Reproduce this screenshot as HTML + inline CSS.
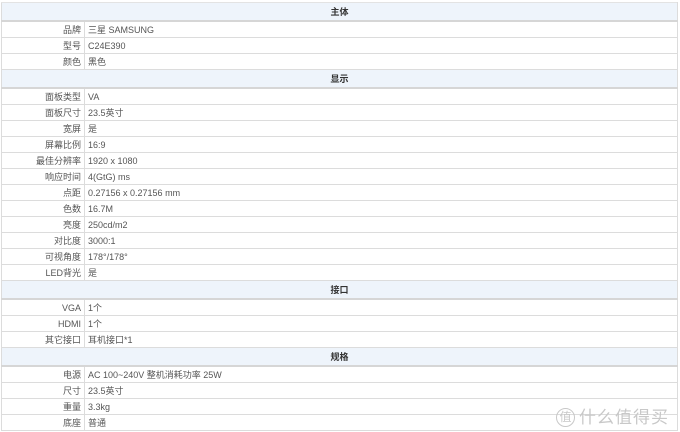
<!DOCTYPE html>
<html><head><meta charset="utf-8"><style>
body{margin:0;background:#fff;font-family:"Liberation Sans","Noto Sans CJK SC",sans-serif;}
table{position:absolute;left:1px;top:2px;width:677px;border-collapse:collapse;font-size:9px;color:#555;}
td{border:1px solid #dcdcdc;height:15px;padding:0 3px;line-height:14px;white-space:nowrap;}
td.l{width:76px;text-align:right;}
tr.h td{background:#eef4fb;height:17px;line-height:16px;text-align:center;font-weight:bold;color:#333;border-top:1px solid #e3e3e3;border-bottom:2px solid #d6d6d6;}
.wm{position:absolute;left:556px;top:403px;color:#c8c8c8;font-size:17px;letter-spacing:1px;}
.wm span{display:inline-block;width:17px;height:17px;border:1px solid #c8c8c8;border-radius:50%;font-size:12px;line-height:17px;text-align:center;margin-right:4px;vertical-align:2px;letter-spacing:0}
</style></head><body>
<table>
<tr class="h"><td colspan="2">主体</td></tr>
<tr><td class="l">品牌</td><td>三星 SAMSUNG</td></tr>
<tr><td class="l">型号</td><td>C24E390</td></tr>
<tr><td class="l">颜色</td><td>黑色</td></tr>
<tr class="h"><td colspan="2">显示</td></tr>
<tr><td class="l">面板类型</td><td>VA</td></tr>
<tr><td class="l">面板尺寸</td><td>23.5英寸</td></tr>
<tr><td class="l">宽屏</td><td>是</td></tr>
<tr><td class="l">屏幕比例</td><td>16:9</td></tr>
<tr><td class="l">最佳分辨率</td><td>1920 x 1080</td></tr>
<tr><td class="l">响应时间</td><td>4(GtG) ms</td></tr>
<tr><td class="l">点距</td><td>0.27156 x 0.27156 mm</td></tr>
<tr><td class="l">色数</td><td>16.7M</td></tr>
<tr><td class="l">亮度</td><td>250cd/m2</td></tr>
<tr><td class="l">对比度</td><td>3000:1</td></tr>
<tr><td class="l">可视角度</td><td>178°/178°</td></tr>
<tr><td class="l">LED背光</td><td>是</td></tr>
<tr class="h"><td colspan="2">接口</td></tr>
<tr><td class="l">VGA</td><td>1个</td></tr>
<tr><td class="l">HDMI</td><td>1个</td></tr>
<tr><td class="l">其它接口</td><td>耳机接口*1</td></tr>
<tr class="h"><td colspan="2">规格</td></tr>
<tr><td class="l">电源</td><td>AC 100~240V 整机消耗功率 25W</td></tr>
<tr><td class="l">尺寸</td><td>23.5英寸</td></tr>
<tr><td class="l">重量</td><td>3.3kg</td></tr>
<tr><td class="l">底座</td><td>普通</td></tr>
</table>
<div class="wm"><span>值</span>什么值得买</div>
</body></html>
